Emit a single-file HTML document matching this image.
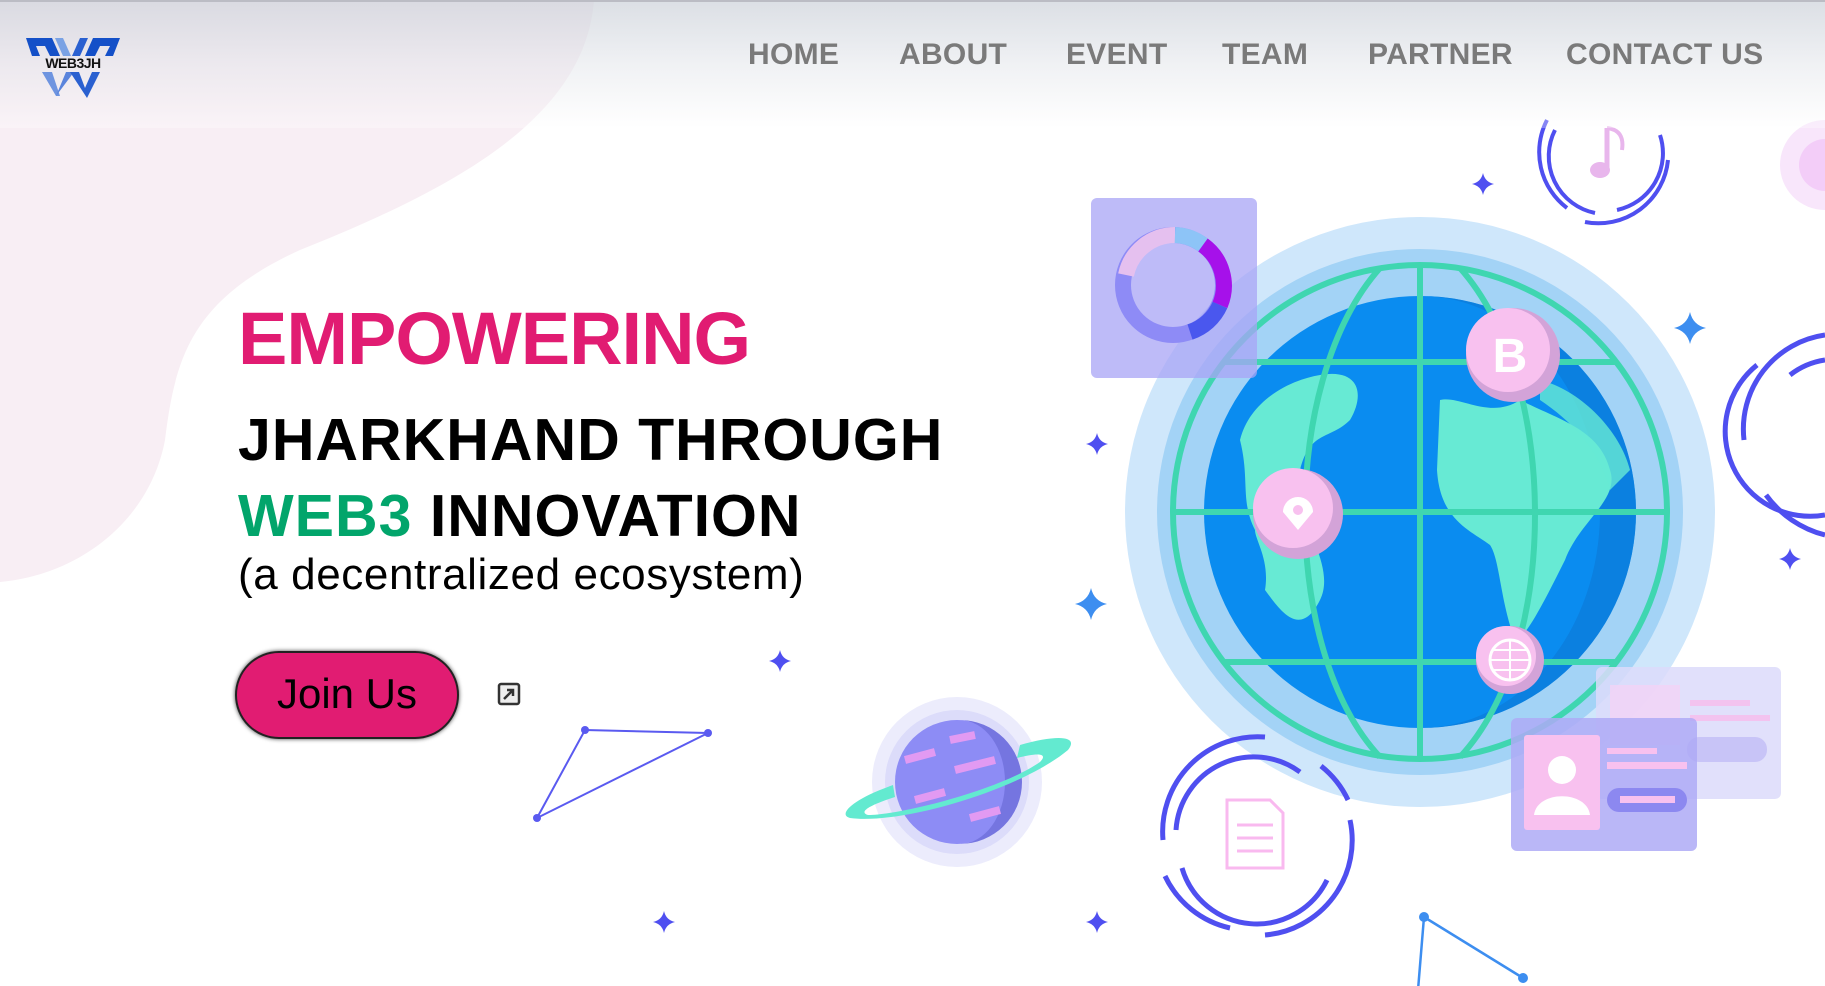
<!DOCTYPE html>
<html><head><meta charset="utf-8"><style>
html,body{margin:0;padding:0;width:1825px;height:986px;overflow:hidden;background:#fff;font-family:"Liberation Sans",sans-serif;}
#bg{position:absolute;left:0;top:0}
.nav{position:absolute;top:0;left:0;width:1825px;height:128px;background:linear-gradient(rgba(205,210,218,0.7) 0%,rgba(225,228,233,0.5) 50%,rgba(255,255,255,0.3) 100%);border-top:2px solid #bbbcc4;box-sizing:border-box}
.nav a{position:absolute;top:36px;font-size:30px;font-weight:bold;color:#7a7a7a;text-decoration:none;letter-spacing:0.3px}
h1{position:absolute;margin:0;left:238px;top:296px;font-size:74px;color:#e11c72;font-weight:bold;letter-spacing:-1px}
.l2{position:absolute;left:238px;font-size:59px;font-weight:bold;color:#000;letter-spacing:1px;white-space:nowrap}
.l2 span{color:#02a56b}
.sub{position:absolute;left:238px;top:550px;font-size:44px;color:#000;white-space:nowrap;letter-spacing:0.6px}
.btn{position:absolute;left:235px;top:651px;width:224px;height:88px;box-sizing:border-box;border:2px solid #222;border-radius:44px;background:#e11c72;box-shadow:0 0 4px #444;font-size:42px;color:#000;text-align:center;line-height:82px}
#logo{position:absolute;left:0;top:0}
</style></head><body>
<svg id="bg" width="1825" height="986" viewBox="0 0 1825 986">
<path d="M0 0 L594 0 C585 120 450 190 300 250 C190 300 175 360 165 440 C150 520 80 575 0 582 Z" fill="#f8eef4"/>
<g fill="#4f4ff0">
<path d="M0 -11 Q2 -2 11 0 Q2 2 0 11 Q-2 2 -11 0 Q-2 -2 0 -11Z" transform="translate(1483,184)"/>
<path d="M0 -11 Q2 -2 11 0 Q2 2 0 11 Q-2 2 -11 0 Q-2 -2 0 -11Z" transform="translate(1097,444)"/>
<path d="M0 -11 Q2 -2 11 0 Q2 2 0 11 Q-2 2 -11 0 Q-2 -2 0 -11Z" transform="translate(780,661)"/>
<path d="M0 -11 Q2 -2 11 0 Q2 2 0 11 Q-2 2 -11 0 Q-2 -2 0 -11Z" transform="translate(664,922)"/>
<path d="M0 -11 Q2 -2 11 0 Q2 2 0 11 Q-2 2 -11 0 Q-2 -2 0 -11Z" transform="translate(1097,922)"/>
<path d="M0 -11 Q2 -2 11 0 Q2 2 0 11 Q-2 2 -11 0 Q-2 -2 0 -11Z" transform="translate(1790,559)"/>
</g>
<g fill="#3d8ef0">
<path d="M0 -16 Q3 -3 16 0 Q3 3 0 16 Q-3 3 -16 0 Q-3 -3 0 -16Z" transform="translate(1690,328)"/>
<path d="M0 -16 Q3 -3 16 0 Q3 3 0 16 Q-3 3 -16 0 Q-3 -3 0 -16Z" transform="translate(1091,604)"/>
</g>
<g stroke="#5a5af0" stroke-width="2" fill="none"><path d="M585 730 L708 733 L537 818 Z"/></g>
<g fill="#5a5af0"><circle cx="585" cy="730" r="4"/><circle cx="708" cy="733" r="4"/><circle cx="537" cy="818" r="4"/></g>
<g stroke="#3d8ef0" stroke-width="2.5" fill="none"><path d="M1424 917 L1523 978 M1424 917 L1418 990"/></g>
<circle cx="1424" cy="917" r="5" fill="#3d8ef0"/><circle cx="1523" cy="978" r="5" fill="#3d8ef0"/>
<circle cx="1825" cy="165" r="45" fill="#f8e6fb"/><circle cx="1825" cy="165" r="26" fill="#f3cdf8"/>
<g fill="none" stroke="#4f4ff0" stroke-width="4">
<path d="M1555 130 A58 58 0 0 0 1595 213" /><path d="M1617 210 A58 58 0 0 0 1660 135"/>
<path d="M1547 120 A70 70 0 0 0 1567 208"/><path d="M1585 222 A70 70 0 0 0 1668 160"/>
</g>
<path d="M1607 128 L1607 168" stroke="#e8b6ec" stroke-width="5"/><ellipse cx="1600" cy="170" rx="10" ry="8" fill="#e8b6ec"/><path d="M1607 128 Q1625 130 1622 150" stroke="#e8b6ec" stroke-width="4" fill="none"/>
<g fill="none" stroke="#4f4ff0" stroke-width="5">
<path d="M1825 335 A95 95 0 0 0 1744 440"/><path d="M1757 365 A85 85 0 0 0 1825 515"/>
<path d="M1790 375 A75 75 0 0 1 1825 360"/><path d="M1766 495 A105 105 0 0 0 1825 535"/>
</g>
<circle cx="1420" cy="512" r="295" fill="#cfe7fb"/>
<circle cx="1420" cy="512" r="263" fill="#a3d3f6"/>
<circle cx="1420" cy="512" r="216" fill="#0a8cf0"/>
<path d="M1420 296 A216 216 0 0 1 1420 728 A180 216 0 0 0 1420 296Z" fill="#0c7bd8" opacity="0.7"/>
<g fill="#67ead4">
<path d="M1240 440 C1250 400 1290 380 1320 375 C1360 368 1365 395 1350 420 C1330 440 1310 430 1300 470 C1280 500 1340 560 1320 600 C1300 640 1280 610 1265 590 C1270 560 1255 540 1255 530 C1240 500 1250 480 1240 440Z"/>
<path d="M1440 400 C1460 395 1490 420 1520 400 C1560 420 1600 430 1610 470 C1620 500 1580 520 1565 560 C1545 600 1525 640 1515 640 C1500 600 1500 560 1490 545 C1470 530 1440 520 1437 470Z"/>
<path d="M1540 380 C1580 390 1620 430 1630 470 L1610 490 C1600 450 1570 420 1540 400Z" opacity="0.8"/>
</g>
<g fill="none" stroke="#3fd6b0" stroke-width="6">
<circle cx="1420" cy="512" r="247"/>
<line x1="1420" y1="265" x2="1420" y2="759"/>
<line x1="1173" y1="512" x2="1667" y2="512"/>
<line x1="1225" y1="362" x2="1615" y2="362"/>
<line x1="1225" y1="662" x2="1615" y2="662"/>
<path d="M1380 268 C1280 380 1280 650 1380 757"/>
<path d="M1460 268 C1560 380 1560 650 1460 757"/>
</g>
<circle cx="1513" cy="355" r="47" fill="#d3a3d8"/><circle cx="1508" cy="350" r="42" fill="#f8c1ef"/>
<text x="1510" y="372" font-size="48" font-weight="bold" fill="#fff" text-anchor="middle" font-family="Liberation Sans,sans-serif">B</text>
<circle cx="1298" cy="514" r="45" fill="#d3a3d8"/><circle cx="1293" cy="508" r="40" fill="#f8c1ef"/>
<path d="M1298 530 L1283 512 A14 14 0 1 1 1313 512Z" fill="#fff"/><circle cx="1298" cy="510" r="5" fill="#f8c1ef"/>
<circle cx="1510" cy="660" r="34" fill="#d3a3d8"/><circle cx="1506" cy="656" r="30" fill="#f8c1ef"/>
<circle cx="1510" cy="660" r="20" fill="none" stroke="#fff" stroke-width="3"/>
<path d="M1490 660 H1530 M1510 640 V680 M1493 650 H1527 M1493 670 H1527" stroke="#fff" stroke-width="2"/>
<rect x="1091" y="198" width="166" height="180" rx="6" fill="#a8a4f6" opacity="0.75"/>
<g fill="none" stroke-width="16">
<circle cx="1173" cy="285" r="50" stroke="#8e8bf6"/>
<path d="M1126 275 A50 50 0 0 1 1175 235" stroke="#e5c0ef"/>
<path d="M1175 235 A50 50 0 0 1 1203 245" stroke="#8dc4f7"/>
<path d="M1203 245 A50 50 0 0 1 1220 305" stroke="#a611ea"/>
<path d="M1220 305 A50 50 0 0 1 1190 332" stroke="#4a57ee"/>
</g>
<g fill="none" stroke="#4f4ff0" stroke-width="5">
<path d="M1265 737 A95 95 0 0 0 1163 840"/><path d="M1165 876 A95 95 0 0 0 1230 928"/>
<path d="M1265 935 A95 95 0 0 0 1350 820"/><path d="M1321 766 A95 95 0 0 1 1348 800"/>
<path d="M1176 830 A78 78 0 0 1 1300 772"/><path d="M1182 868 A78 78 0 0 0 1327 880"/>
</g>
<g fill="none" stroke="#f9b9ef" stroke-width="3"><path d="M1227 800 H1270 L1283 813 V868 H1227Z"/><path d="M1237 825 H1273 M1237 838 H1273 M1237 851 H1273"/></g>
<rect x="1596" y="667" width="185" height="132" rx="6" fill="#dcdafa" opacity="0.85"/>
<rect x="1610" y="685" width="70" height="60" fill="#f3d3f6" opacity="0.8"/>
<rect x="1690" y="700" width="60" height="6" fill="#f3c3ef"/><rect x="1690" y="715" width="80" height="6" fill="#f3c3ef"/>
<rect x="1687" y="737" width="80" height="25" rx="12" fill="#c8c4f7"/>
<rect x="1511" y="718" width="186" height="133" rx="6" fill="#aeaaf6" opacity="0.85"/>
<rect x="1524" y="735" width="76" height="95" rx="3" fill="#f8c1ef"/>
<circle cx="1562" cy="770" r="14" fill="#fff"/><path d="M1534 815 C1537 790 1587 790 1590 815Z" fill="#fff"/>
<rect x="1607" y="748" width="50" height="6" fill="#f8c1ef"/><rect x="1607" y="762" width="80" height="7" fill="#f8c1ef"/>
<rect x="1607" y="788" width="80" height="24" rx="12" fill="#8c88f0"/><rect x="1620" y="796" width="55" height="7" fill="#f8c1ef"/>
<circle cx="957" cy="782" r="85" fill="#ececfc"/><circle cx="957" cy="782" r="72" fill="#dcdcfa"/>
<circle cx="957" cy="782" r="62" fill="#8d8cf5"/>
<path d="M960 720 A62 62 0 0 1 960 844 A45 62 0 0 0 960 720Z" fill="#7575e0"/>
<g stroke="#e29af2" stroke-width="8"><path d="M905 760 L935 752 M955 770 L995 760 M915 800 L945 792 M970 818 L1000 810 M950 740 L975 735"/></g>
<path d="M850 818 C900 825 1020 790 1068 750 C1080 735 1055 735 1020 745 L1017 758 C1040 752 1048 754 1040 762 C1000 790 900 815 868 815 C858 812 870 805 895 797 L893 785 C850 800 838 815 850 818Z" fill="#63ead0"/>
</svg>
<div class="nav">
<a style="left:748px">HOME</a>
<a style="left:899px">ABOUT</a>
<a style="left:1066px">EVENT</a>
<a style="left:1222px">TEAM</a>
<a style="left:1368px">PARTNER</a>
<a style="left:1566px">CONTACT US</a>
</div>
<svg id="logo" width="140" height="110" viewBox="0 0 140 110">
<path d="M26 38 H52 L60 56 H50 L45 46 H36 L40 56 H32Z" fill="#1450c8"/>
<path d="M55 38 H63 L71 56 H63Z" fill="#7aa2e4"/>
<path d="M72 56 L80 38 H88 L80 56Z" fill="#2a60d0"/>
<path d="M85 56 L93 38 H120 L113 56 H105 L110 46 H100 L95 56Z" fill="#1450c8"/>
<path d="M42 72 H52 L60 96 H56Z" fill="#6e94e0"/>
<path d="M56 96 L66 72 H74Z" fill="#5a84dc"/>
<path d="M70 72 H79 L85 88 L92 72 H100 L87 98Z" fill="#2a60d0"/>
<text x="73" y="68" font-size="14" font-weight="bold" fill="#111" text-anchor="middle" font-family="Liberation Sans,sans-serif" letter-spacing="-0.5">WEB3JH</text>
</svg>
<h1>EMPOWERING</h1>
<div class="l2" style="top:406px">JHARKHAND THROUGH</div>
<div class="l2" style="top:482px"><span>WEB3</span> INNOVATION</div>
<div class="sub">(a decentralized ecosystem)</div>
<div class="btn">Join Us</div>
<svg style="position:absolute;left:497px;top:682px" width="24" height="24" viewBox="0 0 24 24"><rect x="2" y="2" width="20" height="20" rx="2" fill="#eee" stroke="#333" stroke-width="2.5"/><path d="M7 17 L16 8 M10 8 H16 V14" stroke="#333" stroke-width="2.5" fill="none"/></svg>
</body></html>
